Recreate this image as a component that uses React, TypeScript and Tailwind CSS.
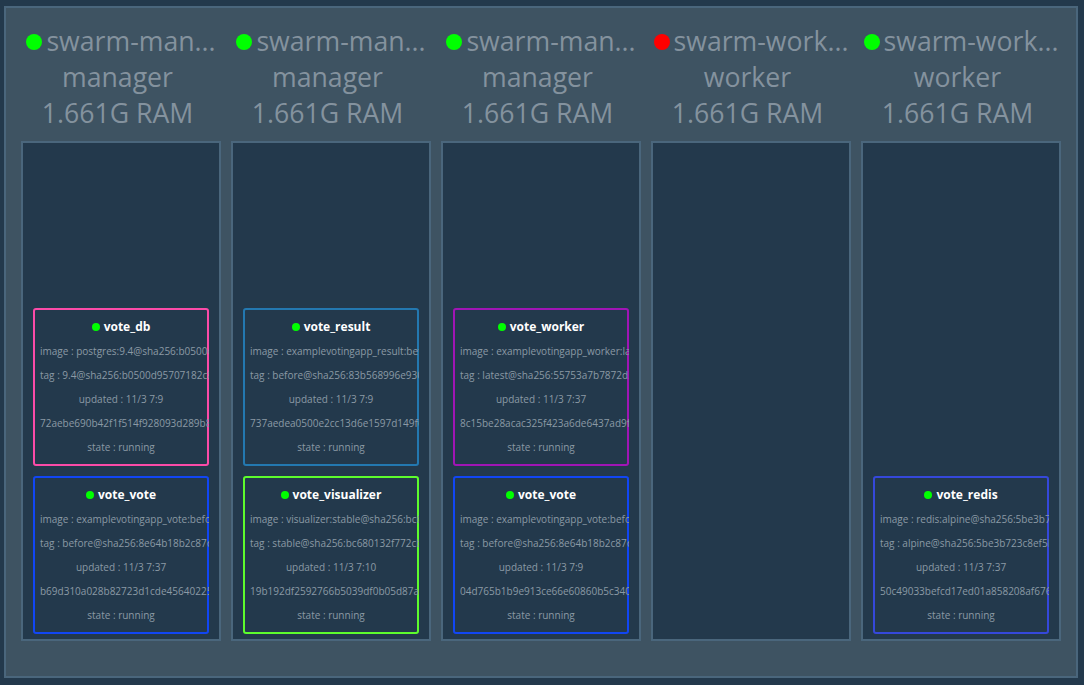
type Task = {
  name: string;
  border: string;
  image: string;
  tag: string;
  updated: string;
  id: string;
};

type Node = {
  name: string;
  role: string;
  up: boolean;
  tasks: Task[];
};

const vote = {
  name: 'vote_vote',
  border: 'border-[#1146f4]',
  image: 'examplevotingapp_vote:before',
  tag: 'before@sha256:8e64b18b2c87de',
};

const nodes: Node[] = [
  {
    name: 'swarm-man...',
    role: 'manager',
    up: true,
    tasks: [
      {
        name: 'vote_db',
        border: 'border-[#fb4ba8]',
        image: 'postgres:9.4@sha256:b0500d9',
        tag: '9.4@sha256:b0500d95707182c8a',
        updated: '11/3 7:9',
        id: '72aebe690b42f1f514f928093d289b8e',
      },
      { ...vote, updated: '11/3 7:37', id: 'b69d310a028b82723d1cde4564022564' },
    ],
  },
  {
    name: 'swarm-man...',
    role: 'manager',
    up: true,
    tasks: [
      {
        name: 'vote_result',
        border: 'border-[#2378b0]',
        image: 'examplevotingapp_result:before',
        tag: 'before@sha256:83b568996e9306',
        updated: '11/3 7:9',
        id: '737aedea0500e2cc13d6e1597d149f6a',
      },
      {
        name: 'vote_visualizer',
        border: 'border-[#5dfc2d]',
        image: 'visualizer:stable@sha256:bc68013',
        tag: 'stable@sha256:bc680132f772cb4',
        updated: '11/3 7:10',
        id: '19b192df2592766b5039df0b05d87a2c',
      },
    ],
  },
  {
    name: 'swarm-man...',
    role: 'manager',
    up: true,
    tasks: [
      {
        name: 'vote_worker',
        border: 'border-[#a015b5]',
        image: 'examplevotingapp_worker:latest',
        tag: 'latest@sha256:55753a7b7872d3e',
        updated: '11/3 7:37',
        id: '8c15be28acac325f423a6de6437ad9fb',
      },
      { ...vote, updated: '11/3 7:9', id: '04d765b1b9e913ce66e60860b5c34067' },
    ],
  },
  { name: 'swarm-work...', role: 'worker', up: false, tasks: [] },
  {
    name: 'swarm-work...',
    role: 'worker',
    up: true,
    tasks: [
      {
        name: 'vote_redis',
        border: 'border-[#3548db]',
        image: 'redis:alpine@sha256:5be3b723',
        tag: 'alpine@sha256:5be3b723c8ef5b1',
        updated: '11/3 7:37',
        id: '50c49033befcd17ed01a858208af6763',
      },
    ],
  },
];

function Row({ text, fit }: { text: string; fit?: boolean }) {
  return (
    <div className={fit ? 'text-center' : 'w-0'}>{text}</div>
  );
}

function TaskCard({ task }: { task: Task }) {
  return (
    <div className="h-[158px] w-44 shrink-0 overflow-hidden">
      <div
        className={`h-full rounded-[3px] border-2 px-[5px] pt-[5px] text-[10px] leading-6 whitespace-nowrap text-[#8b99a5] ${task.border}`}
      >
        <div className="flex items-center justify-center gap-1 text-xs leading-6 font-bold text-white">
          <span className="-mt-px size-2 rounded-full bg-[#00ff00]" />
          {task.name}
        </div>
        <Row text={`image : ${task.image}`} />
        <Row text={`tag : ${task.tag}`} />
        <Row text={`updated : ${task.updated}`} fit />
        <Row text={task.id} />
        <Row text="state : running" fit />
      </div>
    </div>
  );
}

function NodeColumn({ node }: { node: Node }) {
  return (
    <section className="w-[200px]">
      <header className="h-[118px] text-center text-[26.67px] leading-9 whitespace-nowrap text-[#84929e]">
        <div className="flex h-9 items-center justify-center gap-1">
          <span
            className={`mt-0.5 size-4 shrink-0 rounded-full ${node.up ? 'bg-[#00ff00]' : 'bg-[#ff0000]'}`}
          />
          {node.name}
        </div>
        <div className="pr-[7px]">{node.role}</div>
        <div className="pr-[7px]">1.661G RAM</div>
      </header>
      <div className="flex h-[500px] flex-col items-center justify-end gap-2.5 border-2 border-[#4a667c] bg-[#23394c] pb-[5px]">
        {node.tasks.map((task) => (
          <TaskCard key={task.name} task={task} />
        ))}
      </div>
    </section>
  );
}

export default function App() {
  return (
    <div className="h-[685px] w-[1084px] overflow-hidden bg-[#23394c] pt-1.5 pl-1 font-['Open_Sans',sans-serif]">
      <main className="flex h-[672px] w-[1074px] gap-2.5 border-2 border-[#4a667c] bg-[#3e5362] pt-[15px] pl-[15px]">
        {nodes.map((node, i) => (
          <NodeColumn key={i} node={node} />
        ))}
      </main>
    </div>
  );
}
